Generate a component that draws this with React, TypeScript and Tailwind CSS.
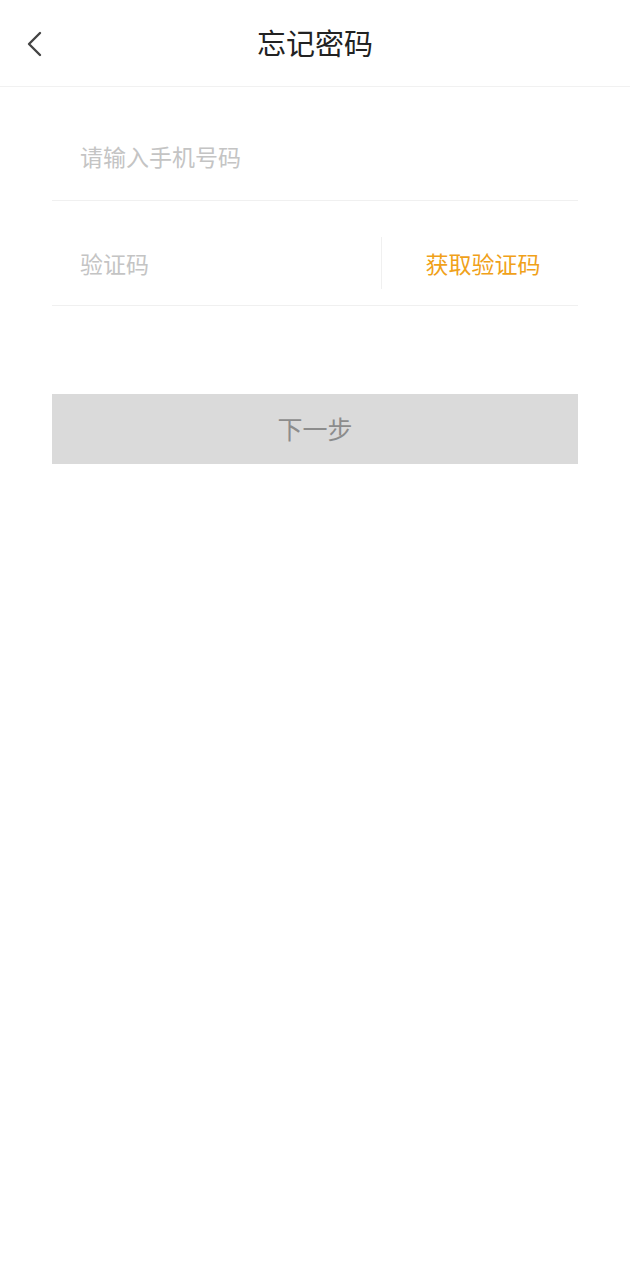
import React from 'react';

const BackIcon = () => (
  <svg width="20" height="28" viewBox="0 0 20 28" fill="none" stroke="#444" strokeWidth={2.4} strokeLinecap="round" strokeLinejoin="round">
    <path d="M15 3 L4 14 L15 25" />
  </svg>
);

export default function App() {
  return (
    <div className="min-h-screen bg-white font-['Noto_Sans_CJK_SC','Noto_Sans',sans-serif]">
      {/* header */}
      <div className="relative h-[87px] flex items-center justify-center border-b border-[#f1f1f1]">
        <button className="absolute left-[25px] top-[30px]">
          <BackIcon />
        </button>
        <h1 className="text-[29px] text-[#222] leading-none -mt-[2px]">忘记密码</h1>
      </div>

      <div className="px-[52px] pt-[26px]">
        <div className="h-[88px] flex items-center pl-[28px] border-b border-[#f0f0f0]">
          <input
            className="flex-1 text-[23px] outline-none placeholder:text-[#c4c4c4] bg-transparent"
            placeholder="请输入手机号码"
          />
        </div>

        <div className="h-[105px] pt-[20px] flex items-center border-b border-[#f0f0f0]">
          <div className="flex-1 pl-[28px]">
            <input
              className="w-full text-[23px] outline-none placeholder:text-[#c4c4c4] bg-transparent"
              placeholder="验证码"
            />
          </div>
          <div className="w-px h-[52px] bg-[#f0f0f0]" />
          <button className="w-[196px] text-[23px] text-[#f0a119] text-center pl-[6px]">获取验证码</button>
        </div>

        <button className="mt-[88px] w-full h-[70px] bg-[#dadada] text-[25px] text-[#8c8c8c]">下一步</button>
      </div>
    </div>
  );
}
